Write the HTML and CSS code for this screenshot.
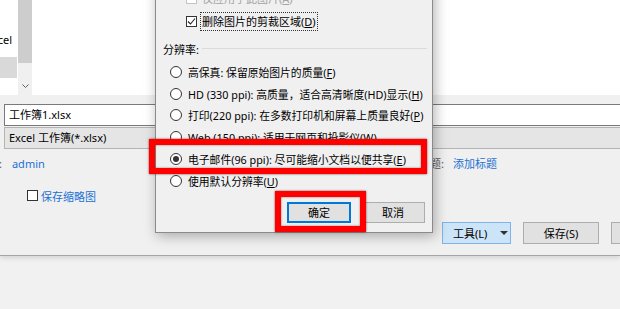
FILE: index.html
```html
<!DOCTYPE html>
<html lang="zh-CN">
<head>
    <meta charset="UTF-8">
    <title>另存为 - 压缩图片</title>
    <link rel="stylesheet" href="styles.css">
</head>
<body>
    <div class="save">
        <div class="browser">
            <div class="nav">
                <div class="nav-item">Excel</div>
                <div class="nav-item sel"></div>
            </div>
            <div class="scroll">
                <div class="thumb"></div>
                <div class="track">
                    <svg class="chev" width="7" height="5" viewBox="0 0 7 5"><polyline points="0.5,0.5 3.5,3.5 6.5,0.5" fill="none" stroke="#606060" stroke-width="1"/></svg>
                </div>
            </div>
            <div class="files"></div>
        </div>

        <div class="form">
            <div class="field name">工作簿1.xlsx</div>
            <div class="field type">Excel 工作簿(*.xlsx)</div>
            <div class="meta">
                <div class="meta-group left"><span class="lbl">作者:</span><span class="link">admin</span></div>
                <div class="meta-group right"><span class="lbl">标题:</span><span class="link">添加标题</span></div>
            </div>
            <div class="thumbopt"><span class="box"></span><span class="link">保存缩略图</span></div>
            <div class="actions">
                <button class="btn tools"><span>工具(L)</span><span class="caret"></span></button>
                <button class="btn">保存(S)</button>
                <button class="btn">取消</button>
            </div>
        </div>
    </div>

    <div class="compress">
        <div class="check-row disabled">
            <span class="cbox"></span>
            <span class="ctext">仅应用于此图片(<u>A</u>)</span>
        </div>
        <div class="check-row">
            <span class="cbox">
                <svg width="9" height="9" viewBox="0 0 9 9"><polyline points="1,4.5 3.5,7 8,1.5" fill="none" stroke="#222" stroke-width="1.1"/></svg>
            </span>
            <span class="ctext focus">删除图片的剪裁区域(<u>D</u>)</span>
        </div>

        <div class="section">
            <span>分辨率:</span>
            <span class="rule"></span>
        </div>

        <div class="radios">
            <div class="radio"><span class="dot"></span><span>高保真: 保留原始图片的质量(<u>F</u>)</span></div>
            <div class="radio"><span class="dot"></span><span>HD (330 ppi): 高质量，适合高清晰度(HD)显示(<u>H</u>)</span></div>
            <div class="radio"><span class="dot"></span><span>打印(220 ppi): 在多数打印机和屏幕上质量良好(<u>P</u>)</span></div>
            <div class="radio"><span class="dot"></span><span>Web (150 ppi): 适用于网页和投影仪(<u>W</u>)</span></div>
            <div class="radio"><span class="dot on"></span><span>电子邮件(96 ppi): 尽可能缩小文档以便共享(<u>E</u>)</span></div>
            <div class="radio"><span class="dot"></span><span>使用默认分辨率(<u>U</u>)</span></div>
        </div>

        <div class="dlg-actions">
            <button class="btn ok">确定</button>
            <button class="btn">取消</button>
        </div>
    </div>

    <div class="mark mark-email"></div>
    <div class="mark mark-ok"></div>
</body>
</html>
```

FILE: styles.css
```css
* {
    box-sizing: border-box;
}
body {
    margin: 0;
    width: 620px;
    height: 309px;
    overflow: hidden;
    position: relative;
    background: #f1f1f1;
    font-family: "Noto Sans", "Noto Sans CJK SC", sans-serif;
    font-size: 11px;
    color: #000;
}
u {
    text-decoration: underline;
    text-underline-offset: 1px;
}

/* save-as dialog behind */
.save {
    height: 256px;
    background: #f0f0f0;
    border-bottom: 1px solid #a5a5a5;
    box-shadow: 0 2px 5px rgba(0, 0, 0, 0.12);
}
.browser {
    display: flex;
    height: 95px;
}
.nav {
    width: 18px;
    background: #fff;
    overflow: hidden;
    padding-top: 32px;
}
.nav-item {
    height: 16px;
    line-height: 16px;
    margin-left: -14px;
    white-space: nowrap;
}
.nav-item.sel {
    height: 21px;
    margin: 9px 1px 0 0;
    background: #d9d9d9;
}
.scroll {
    width: 14px;
    display: flex;
    flex-direction: column;
    background: #f0f0f0;
}
.thumb {
    height: 63px;
    background: #cdcdcd;
}
.track {
    flex: 1;
    display: flex;
    align-items: flex-end;
    justify-content: center;
    padding-bottom: 6px;
}
.files {
    flex: 1;
    background: #fff;
}

.form {
    padding: 9px 0 0 4px;
}
.field {
    height: 22px;
    line-height: 20px;
    padding-left: 4px;
    margin-right: -10px;
    border: 1px solid #7a7a7a;
    white-space: nowrap;
}
.name {
    background: #fff;
}
.type {
    margin-top: 1px;
    background: #e5e5e5;
    border-color: #b4b4b4;
}
.meta {
    display: flex;
    height: 16px;
    line-height: 16px;
    margin-top: 7px;
}
.meta-group {
    display: flex;
    white-space: nowrap;
}
.meta-group.left {
    gap: 10px;
    margin-left: -27px;
}
.meta-group.right {
    gap: 9px;
    margin-left: auto;
    margin-right: 123px;
}
.lbl {
    color: #5c5c5c;
}
.link {
    color: #2370d4;
}
.thumbopt {
    display: flex;
    align-items: center;
    gap: 3px;
    height: 13px;
    margin: 17px 0 0 23px;
}
.box {
    width: 11px;
    height: 11px;
    background: #fff;
    border: 1px solid #333;
}
.actions {
    display: flex;
    gap: 12px;
    margin: 20px 0 0 438px;
}

.btn {
    height: 22px;
    padding: 0;
    font: inherit;
    color: #000;
    background: #e1e1e1;
    border: 1px solid #adadad;
    flex: none;
    white-space: nowrap;
}
.actions .btn {
    width: 76px;
}
.actions .tools {
    width: 69px;
    display: flex;
    align-items: center;
    padding-left: 10px;
    background: #cce4f7;
    border-color: #7eb4ea;
}
.caret {
    margin-left: 13px;
    border-left: 4px solid transparent;
    border-right: 4px solid transparent;
    border-top: 4px solid #333;
}

/* compress pictures dialog on top */
.compress {
    position: absolute;
    left: 155px;
    top: -20px;
    width: 278px;
    height: 253px;
    padding: 9px 5px 0 7px;
    background: #f0f0f0;
    border: 1px solid #8a8a8a;
    box-shadow: 2px 3px 12px rgba(0, 0, 0, 0.3);
}
.check-row {
    display: flex;
    align-items: center;
    height: 17px;
    padding-left: 23px;
    white-space: nowrap;
}
.check-row + .check-row {
    margin-top: 6px;
}
.cbox {
    width: 11px;
    height: 11px;
    flex: none;
    display: flex;
    align-items: center;
    justify-content: center;
    background: #fff;
    border: 1px solid #333;
}
.ctext {
    margin-left: 5px;
    line-height: 16px;
}
.focus {
    margin-left: 4px;
    padding: 0 1px;
    outline: 1px dotted #333;
    line-height: 17px;
}
.disabled .cbox {
    border-color: #c4c4c4;
}
.disabled .ctext {
    color: #a3a3a3;
}
.section {
    display: flex;
    align-items: center;
    gap: 3px;
    height: 17px;
    margin-top: 10px;
}
.rule {
    flex: 1;
    border-top: 1px solid #dadada;
}
.radios {
    margin-top: 4px;
    padding-left: 7px;
    font-size: 10.8px;
}
.radio {
    display: flex;
    align-items: center;
    gap: 6px;
    height: 21.8px;
    white-space: nowrap;
}
.dot {
    width: 12px;
    height: 12px;
    flex: none;
    display: flex;
    align-items: center;
    justify-content: center;
    border-radius: 50%;
    background: #fff;
    border: 1px solid #333;
}
.dot.on::after {
    content: "";
    width: 6px;
    height: 6px;
    border-radius: 50%;
    background: #333;
}
.dlg-actions {
    display: flex;
    justify-content: flex-end;
    gap: 10px;
    margin-top: 10px;
    padding-right: 2px;
}
.dlg-actions .btn {
    width: 64px;
    height: 21px;
}
.dlg-actions .ok {
    border: 2px solid #0078d7;
}

/* red highlight annotations */
.mark {
    position: absolute;
    border: 6px solid #f00;
    box-shadow: 0 0 2px rgba(60, 0, 0, 0.7), inset 0 0 2px rgba(60, 0, 0, 0.6);
}
.mark-email {
    left: 149px;
    top: 139px;
    width: 278px;
    height: 35px;
}
.mark-ok {
    left: 275px;
    top: 191px;
    width: 91px;
    height: 41px;
}
```
